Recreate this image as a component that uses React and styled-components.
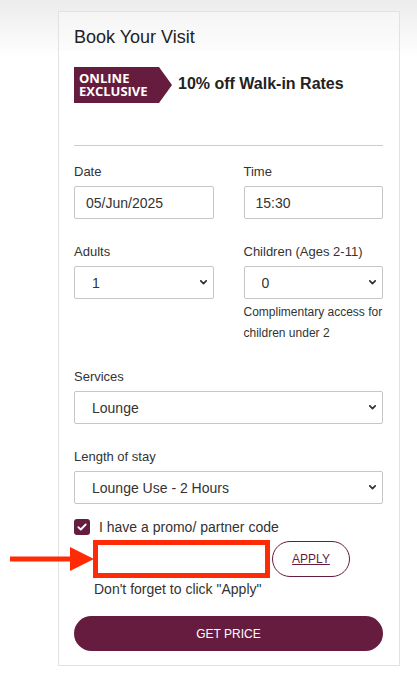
import React from 'react';
import styled, { createGlobalStyle } from 'styled-components';

const MAROON = '#661c3e';

const Global = createGlobalStyle`
  html, body { margin: 0; padding: 0; }
  body {
    background: linear-gradient(#ececec 0px, #ffffff 58px) no-repeat, #ffffff;
    font-family: "Liberation Sans", Arial, Helvetica, sans-serif;
    color: #333;
  }
  * { box-sizing: border-box; }
`;

const Page = styled.div`
  padding: 11px 0 10px 58px;
`;

const Card = styled.div`
  width: 342px;
  border: 1px solid #e2e2e2;
  background: #fff;
`;

const Header = styled.div`
  background: linear-gradient(#f5f5f5, #fcfcfc);
  padding: 15px 15px 3px;
`;

const Title = styled.h2`
  margin: 0;
  font-size: 18px;
  line-height: 21px;
  font-weight: 400;
  color: #222;
`;

const Body = styled.div`
  padding: 16px 16px 14px 15px;
`;

const OfferRow = styled.div`
  display: flex;
  align-items: center;
  gap: 6px;
`;

const Badge = styled.div`
  width: 98px;
  height: 36px;
  background: ${MAROON};
  color: #fff;
  clip-path: polygon(0 0, 85px 0, 100% 50%, 85px 100%, 0 100%);
  font-family: "Open Sans", "Noto Sans", sans-serif;
  font-weight: 700;
  font-size: 13px;
  line-height: 13px;
  padding: 5px 0 0 5px;
`;

const OfferText = styled.div`
  font-size: 16px;
  font-weight: 700;
  color: #222;
  margin-top: -2px;
`;

const Divider = styled.hr`
  margin: 42px 0 18px;
  border: 0;
  border-top: 1px solid #cccccc;
`;

const Row = styled.div`
  display: grid;
  grid-template-columns: 1fr 1fr;
  column-gap: 30px;
  margin-bottom: ${p => p.$gap ?? 25}px;
`;

const Field = styled.div`
  display: flex;
  flex-direction: column;
  margin-bottom: ${p => p.$gap ?? 0}px;
`;

const Label = styled.label`
  font-size: 13px;
  line-height: 15px;
  color: #333;
  margin-bottom: 7px;
`;

const TextInput = styled.input`
  height: 33px;
  width: 100%;
  border: 1px solid #c6c6c6;
  border-radius: 2px;
  padding: 0 0 0 11px;
  font-family: inherit;
  font-size: 14px;
  color: #333;
  background: #fff;
  outline: none;
`;

const SelectWrap = styled.div`
  position: relative;
  height: 33px;
`;

const Select = styled.select`
  appearance: none;
  -webkit-appearance: none;
  width: 100%;
  height: 33px;
  border: 1px solid #c6c6c6;
  border-radius: 2px;
  padding: 0 24px 0 17px;
  font-family: inherit;
  font-size: 14px;
  color: #333;
  background: #fff;
  outline: none;
`;

const Chevron = styled.svg`
  position: absolute;
  right: 7px;
  top: 14px;
  pointer-events: none;
`;

const Help = styled.div`
  font-size: 12px;
  line-height: 21px;
  color: #333;
  margin-top: 3px;
`;

const CheckRow = styled.label`
  display: flex;
  align-items: center;
  gap: 9px;
  font-size: 14px;
  line-height: 16px;
  color: #333;
  margin-top: 15px;
`;

const Box = styled.span`
  width: 16px;
  height: 16px;
  border-radius: 3px;
  background: ${MAROON};
  display: flex;
  align-items: center;
  justify-content: center;
`;

const PromoRow = styled.div`
  position: relative;
  display: flex;
  align-items: center;
  margin: 5px 0 0 19px;
`;

const PromoInput = styled.input`
  width: 177px;
  height: 38px;
  border: 5px solid #ff2b06;
  background: #fff;
  outline: none;
  font-family: inherit;
  font-size: 14px;
`;

const ApplyButton = styled.button`
  margin-left: 2px;
  width: 78px;
  height: 36px;
  border: 1px solid ${MAROON};
  border-radius: 18px;
  background: #fff;
  color: ${MAROON};
  font-family: inherit;
  font-size: 12px;
  text-decoration: underline;
  padding: 0;
`;

const Arrow = styled.svg`
  position: absolute;
  left: -83px;
  top: 7px;
  overflow: visible;
`;

const Note = styled.div`
  margin: 3px 0 0 20px;
  font-size: 14px;
  line-height: 16px;
  color: #333;
`;

const PriceButton = styled.button`
  margin-top: 19px;
  width: 100%;
  height: 35px;
  border: 0;
  border-radius: 18px;
  background: ${MAROON};
  color: #fff;
  font-family: inherit;
  font-size: 12px;
  padding: 0;
`;

const Down = () => (
  <Chevron width="7" height="5" viewBox="0 0 7 5">
    <path d="M0.8 0.8 L3.5 3.6 L6.2 0.8" fill="none" stroke="#333" strokeWidth="1.7" strokeLinecap="round" strokeLinejoin="round" />
  </Chevron>
);

export default function App() {
  return (
    <>
      <Global />
      <Page>
        <Card>
          <Header>
            <Title>Book Your Visit</Title>
          </Header>
          <Body>
            <OfferRow>
              <Badge>ONLINE<br />EXCLUSIVE</Badge>
              <OfferText>10% off Walk-in Rates</OfferText>
            </OfferRow>
            <Divider />
            <Row>
              <Field>
                <Label>Date</Label>
                <TextInput defaultValue="05/Jun/2025" />
              </Field>
              <Field>
                <Label>Time</Label>
                <TextInput defaultValue="15:30" />
              </Field>
            </Row>
            <Row>
              <Field>
                <Label>Adults</Label>
                <SelectWrap>
                  <Select defaultValue="1">
                    <option>1</option>
                    <option>2</option>
                  </Select>
                  <Down />
                </SelectWrap>
              </Field>
              <Field>
                <Label>Children (Ages 2-11)</Label>
                <SelectWrap>
                  <Select defaultValue="0">
                    <option>0</option>
                    <option>1</option>
                  </Select>
                  <Down />
                </SelectWrap>
                <Help>Complimentary access for children under 2</Help>
              </Field>
            </Row>
            <Field $gap={25}>
              <Label>Services</Label>
              <SelectWrap>
                <Select defaultValue="Lounge">
                  <option>Lounge</option>
                </Select>
                <Down />
              </SelectWrap>
            </Field>
            <Field>
              <Label>Length of stay</Label>
              <SelectWrap>
                <Select defaultValue="Lounge Use - 2 Hours">
                  <option>Lounge Use - 2 Hours</option>
                </Select>
                <Down />
              </SelectWrap>
            </Field>
            <CheckRow>
              <Box>
                <svg width="10" height="8" viewBox="0 0 10 8">
                  <path d="M1.3 4.2 L3.8 6.5 L8.7 1.5" fill="none" stroke="#fff" strokeWidth="1.8" strokeLinecap="round" strokeLinejoin="round" />
                </svg>
              </Box>
              I have a promo/ partner code
            </CheckRow>
            <PromoRow>
              <Arrow width="84" height="24" viewBox="0 0 84 24">
                <rect x="0" y="9.5" width="62" height="5" fill="#ff2b06" />
                <polygon points="60,0 84,12 60,24" fill="#ff2b06" />
              </Arrow>
              <PromoInput />
              <ApplyButton>APPLY</ApplyButton>
            </PromoRow>
            <Note>Don't forget to click "Apply"</Note>
            <PriceButton>GET PRICE</PriceButton>
          </Body>
        </Card>
      </Page>
    </>
  );
}
